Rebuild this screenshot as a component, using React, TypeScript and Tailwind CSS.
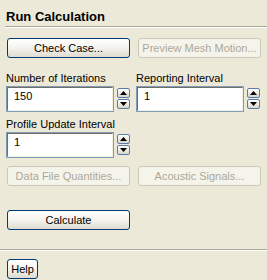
import React from "react";

// Run Calculation task page (XP-style widgets)

function Btn({ label, disabled, w }: { label: string; disabled?: boolean; w: string }) {
  return (
    <div
      className={
        disabled
          ? `${w} h-[20px] flex items-center justify-center rounded-[3px] border border-[#C9C7BA] bg-[#F5F4EA] text-[#ACA899]`
          : `${w} h-[20px] flex items-center justify-center rounded-[3px] border border-[#003C74] bg-gradient-to-b from-white via-[#F4F3EE] to-[#DEDBD0] text-black`
      }
    >
      {label}
    </div>
  );
}

function Arrow({ up }: { up?: boolean }) {
  return (
    <div className="w-[13px] h-[10px] flex items-center justify-center rounded-[2px] border border-[#5A7EAC] bg-gradient-to-b from-white to-[#D9D6CA]">
      <svg width="7" height="4" viewBox="0 0 7 4">
        {up ? <polygon points="0,4 7,4 3.5,0" fill="#000" /> : <polygon points="0,0 7,0 3.5,4" fill="#000" />}
      </svg>
    </div>
  );
}

function SpinField({ label, value }: { label: string; value: string }) {
  return (
    <div className="flex flex-col">
      <div className="leading-[13px] whitespace-nowrap">{label}</div>
      <div className="flex mt-[1px]">
        <div className="w-[108px] h-[26px] border border-[#7F9DB9]">
          <div className="h-full border-t border-l border-t-[#716F64] border-l-[#716F64] border-b border-r border-b-[#F1EFE2] border-r-[#F1EFE2] bg-white pl-[6px] pt-[2px] leading-[13px]">
            {value}
          </div>
        </div>
        <div className="ml-[3px] mt-[2px] flex flex-col gap-[1px]">
          <Arrow up />
          <Arrow />
        </div>
      </div>
    </div>
  );
}

export default function App() {
  return (
    <div className="w-[267px] h-[280px] bg-[#ECE9D8] flex flex-col font-['Liberation_Sans',Arial,sans-serif] text-[11px] text-black overflow-hidden">
      <div className="pl-[6px] pt-[9px] text-[13px] font-bold leading-[16px]">Run Calculation</div>
      <div className="ml-[5px] mt-[1px] border-t border-t-[#ACA899] border-b border-b-white" />

      <div className="mt-[10px] pl-[7px] flex gap-[8px]">
        <Btn label="Check Case..." w="w-[123px]" />
        <Btn label="Preview Mesh Motion..." w="w-[123px]" disabled />
      </div>

      <div className="mt-[14px] pl-[6px] grid grid-cols-[124px_124px] gap-x-[6px] gap-y-[6px]">
        <SpinField label="Number of Iterations" value="150" />
        <SpinField label="Reporting Interval" value="1" />
        <SpinField label="Profile Update Interval" value="1" />
      </div>

      <div className="mt-[8px] pl-[7px] flex gap-[8px]">
        <Btn label="Data File Quantities..." w="w-[123px]" disabled />
        <Btn label="Acoustic Signals..." w="w-[123px]" disabled />
      </div>

      <div className="mt-[24px] pl-[7px] flex">
        <Btn label="Calculate" w="w-[123px]" />
      </div>

      <div className="mt-[19px] border-t border-t-[#ACA899] border-b border-b-white" />

      <div className="mt-[8px] pl-[7px] flex">
        <Btn label="Help" w="w-[31px]" />
      </div>
    </div>
  );
}
